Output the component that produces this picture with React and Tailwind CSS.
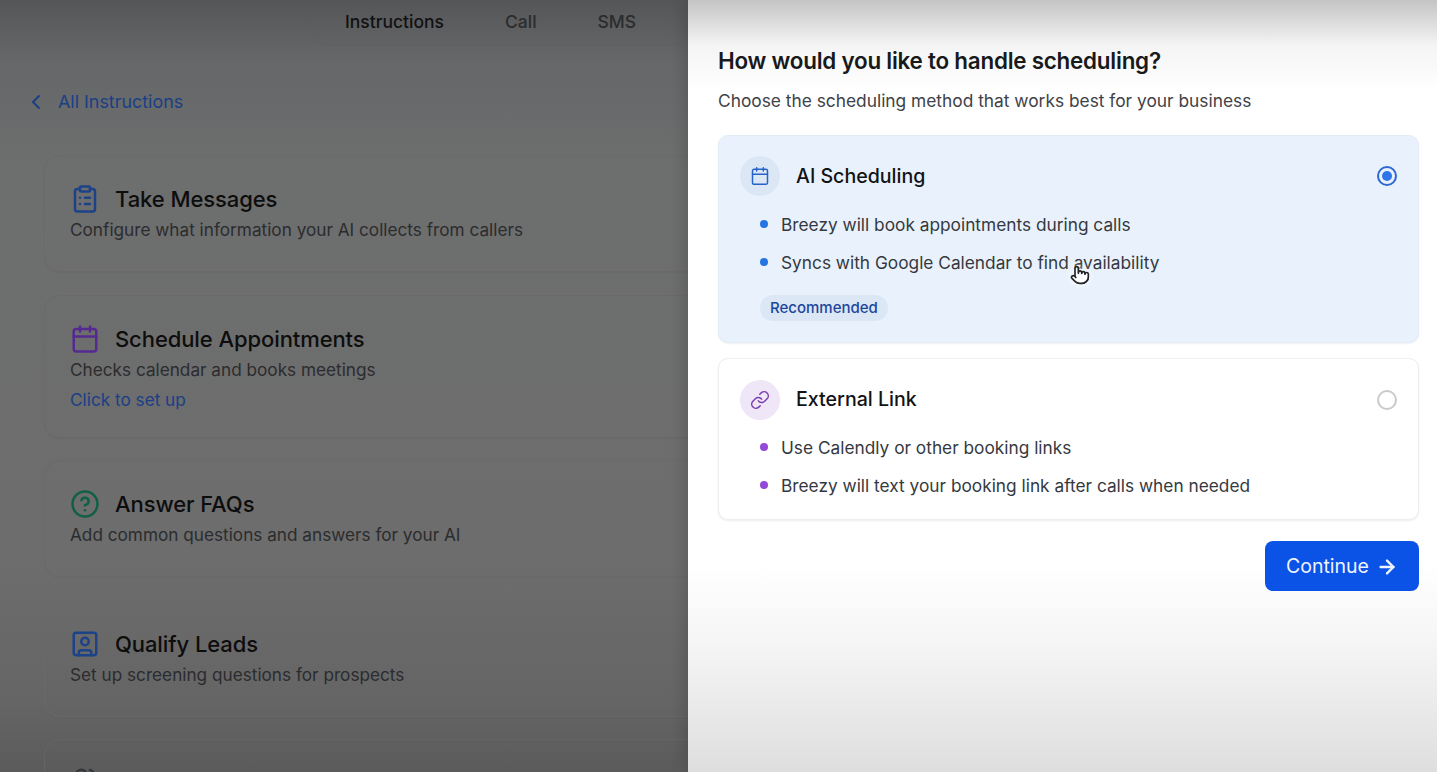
import React from 'react';
import { ArrowRight, Calendar, ChevronLeft, CircleHelp, ClipboardList, Link, Pointer, SquareUser, Users } from 'lucide-react';

const instructions = [
  { title: 'Take Messages', desc: 'Configure what information your AI collects from callers', Icon: ClipboardList, color: 'text-[#1c4288]', height: 'h-[117px]' },
  { title: 'Schedule Appointments', desc: 'Checks calendar and books meetings', cta: 'Click to set up', Icon: Calendar, color: 'text-[#552a90]', height: 'h-[143px]' },
  { title: 'Answer FAQs', desc: 'Add common questions and answers for your AI', Icon: CircleHelp, color: 'text-[#0f6045]', height: 'h-[117px]' },
  { title: 'Qualify Leads', desc: 'Set up screening questions for prospects', Icon: SquareUser, color: 'text-[#1c4288]', height: 'h-[117px]' },
];

const InstructionCard = ({ title, desc, cta, Icon, color, height }) => (
  <div className={`${height} shrink-0 -mr-4 rounded-2xl border border-[#6a6a6a] pl-[25px] pt-[26px] shadow-[0_1px_2px_rgba(0,0,0,0.04)]`}>
    <div className="flex h-[34px] items-center gap-[15px]">
      <Icon size={30} strokeWidth={2} className={color} />
      <h3 className="text-[22px] font-medium leading-none tracking-[-0.004em] text-[#0d0d0d]">{title}</h3>
    </div>
    <p className="mt-[1px] text-[17.2px] leading-[26px] text-[#2b2c2e]">{desc}</p>
    {cta && <p className="mt-[4px] text-[17.2px] leading-[26px] text-[#1a3f86]">{cta}</p>}
  </div>
);

const Bullet = ({ color, children }) => (
  <li className="flex items-center gap-[13px] text-[#35393f]">
    <span className={`mb-[2px] ml-[1px] size-[8px] rounded-full ${color}`}></span>
    {children}
  </li>
);

export default function App() {
  return (
    <div className="flex h-[772px] w-[1437px] overflow-hidden font-['Inter',sans-serif]">
      {/* dimmed page behind the sheet */}
      <div className="w-[688px] shrink-0 overflow-hidden bg-[linear-gradient(180deg,#555657_0px,#666768_60px,#6d6e6e_170px,#6d6d6d_560px,#656565_700px,#5b5b5b_772px)]">
        <div className="ml-[312px] flex h-[44px] items-center rounded-b-2xl pl-[33px] text-[17.5px] font-medium shadow-[0_1px_2px_rgba(0,0,0,0.03)]">
          <span className="text-[#101112]">Instructions</span>
          <span className="ml-[61px] text-[#2b2c2e]">Call</span>
          <span className="ml-[61px] text-[#2b2c2e]">SMS</span>
        </div>
        <div className="mt-[21px] flex flex-col pt-[25px]">
          <a className="ml-[24px] flex items-center gap-[10px] text-[17.9px] leading-[24px] text-[#1a3f86]">
            <ChevronLeft size={24} strokeWidth={2} />
            All Instructions
          </a>
          <div className="ml-[44px] mt-[41px] flex flex-col gap-[22.5px]">
            {instructions.map((item) => (
              <InstructionCard key={item.title} {...item} />
            ))}
            <div className="h-[60px] shrink-0 -mr-4 rounded-2xl border border-[#646464] pl-[25px] pt-[26px]">
              <Users size={30} strokeWidth={2} className="text-[#33363b]" />
            </div>
          </div>
        </div>
      </div>

      {/* scheduling sheet */}
      <div className="flex-1 bg-[linear-gradient(180deg,#c4c4c4_0px,#f4f4f4_45px,#ffffff_90px,#ffffff_560px,#f6f6f6_640px,#dedede_772px)] pl-[30px] pr-[18px] pt-[45px] shadow-[-6px_0_12px_rgba(0,0,0,0.12)]">
        <h2 className="text-[22.4px] font-semibold leading-[32px] tracking-[-0.01em] text-[#18191b]">How would you like to handle scheduling?</h2>
        <p className="mt-[12px] text-[17.33px] leading-[24px] text-[#3f4248]">Choose the scheduling method that works best for your business</p>

        <div className="mt-[22px] h-[208px] rounded-[10px] border border-[#e3edf8] bg-[#e9f2fc] pl-[21px] pr-[21px] pt-[20px] shadow-[0_1px_2px_rgba(0,0,0,0.06)]">
          <div className="flex items-center">
            <div className="flex size-[40px] items-center justify-center rounded-full bg-[#dbe7f5]">
              <Calendar size={20} strokeWidth={1.8} className="text-[#2563c9]" />
            </div>
            <span className="ml-[16px] mt-[1px] text-[19.6px] font-medium leading-none text-[#121315]">AI Scheduling</span>
            <span className="ml-auto flex size-[20px] items-center justify-center rounded-full border-2 border-[#2f68d0]">
              <span className="size-[10px] rounded-full bg-[#2f74ea]"></span>
            </span>
          </div>
          <ul className="mt-[17px] flex flex-col gap-[14px] pl-[19px] text-[17.3px] leading-[24px]">
            <Bullet color="bg-[#2673e3]">Breezy will book appointments during calls</Bullet>
            <Bullet color="bg-[#2673e3]">
              <span className="relative">
                Syncs with Google Calendar to find availability
                <Pointer size={20} strokeWidth={2} fill="#ffffff" className="absolute left-[289px] top-[14px] text-[#222428] drop-shadow-[0_0_3px_#ffffff]" />
              </span>
            </Bullet>
          </ul>
          <span className="ml-[20px] mt-[20px] inline-block rounded-full bg-[#dbe7f5] px-[10px] py-[2px] text-[15px] font-medium leading-[22px] text-[#1c469c]">Recommended</span>
        </div>

        <div className="mt-[15px] h-[162px] rounded-[10px] border border-[#eeeeee] bg-white pl-[21px] pr-[21px] pt-[21px] shadow-[0_1px_2px_rgba(0,0,0,0.08)]">
          <div className="flex items-center">
            <div className="flex size-[40px] items-center justify-center rounded-full bg-[#efe6f8]">
              <Link size={20} strokeWidth={1.8} className="text-[#7b3fb0]" />
            </div>
            <span className="ml-[16px] text-[19.6px] font-medium leading-none text-[#121315]">External Link</span>
            <span className="ml-auto size-[20px] rounded-full border-2 border-[#c9cacc]"></span>
          </div>
          <ul className="mt-[16px] flex flex-col gap-[14px] pl-[19px] text-[17.3px] leading-[24px]">
            <Bullet color="bg-[#9449d8]">Use Calendly or other booking links</Bullet>
            <Bullet color="bg-[#9449d8]">Breezy will text your booking link after calls when needed</Bullet>
          </ul>
        </div>

        <div className="mt-[21px] flex justify-end">
          <button className="flex h-[50px] w-[154px] items-center justify-center gap-[7px] rounded-[8px] bg-[#0b52e6] pt-[2px] text-[19.5px] font-normal text-[#eef4ff]">
            Continue
            <ArrowRight size={22} strokeWidth={2.6} />
          </button>
        </div>
      </div>
    </div>
  );
}
